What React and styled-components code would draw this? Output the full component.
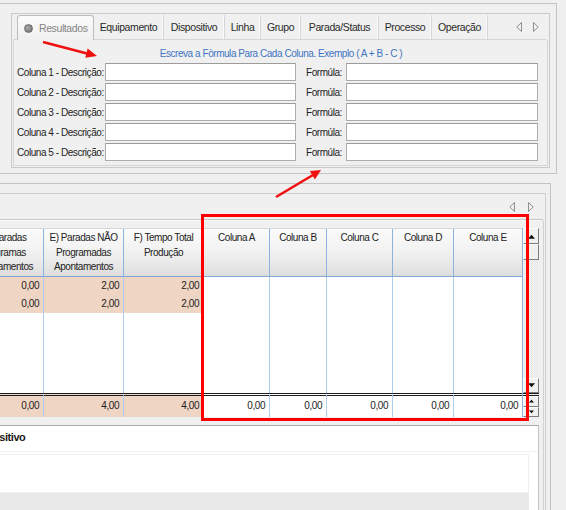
import React from 'react';
import styled, { createGlobalStyle } from 'styled-components';

const Global = createGlobalStyle`
  html, body { margin: 0; padding: 0; background: #f0f0f0; }
  body {
    font-family: "Liberation Sans", Arial, sans-serif;
    font-size: 10px;
    letter-spacing: -0.45px;
    color: #222;
  }
  * { box-sizing: border-box; }
`;

const Screen = styled.div`
  position: relative;
  width: 566px;
  height: 510px;
  overflow: hidden;
  background: #f0f0f0;
`;

/* ---------- top: formula tab ---------- */
const OuterGroup = styled.div`
  margin-top: 3px;
  width: 557px;
  border: 1px solid #c4c4c4;
  border-left: none;
  padding: 9px 6px 5px 11px;
`;

const TabControl = styled.div`
  height: 155px;
  border: 1px solid #cacaca;
  display: flex;
  flex-direction: column;
`;

const TabStrip = styled.div`
  height: 25px;
  padding: 1px 10px 0 5px;
  display: flex;
  align-items: stretch;
`;

const Tab = styled.div`
  position: relative;
  z-index: 1;
  width: ${p => p.$w}px;
  display: flex;
  align-items: center;
  justify-content: ${p => (p.$active ? 'flex-start' : 'center')};
  gap: 6px;
  padding-left: ${p => (p.$active ? '6px' : '0')};
  font-size: 10.5px;
  letter-spacing: -0.4px;
  white-space: nowrap;
  color: ${p => (p.$active ? '#858585' : '#2b2b2b')};
  border-right: 1px solid ${p => (p.$active ? '#bdbdbd' : '#d6d6d6')};
  box-shadow: ${p => (p.$active ? 'none' : 'inset -1px 0 0 #fafafa')};
  ${p =>
    p.$active &&
    `
    border: 1px solid #bdbdbd;
    border-bottom: none;
    border-radius: 3px 3px 0 0;
    background: linear-gradient(#fbfbfb, #f0f0f0);
    margin-bottom: -1px;
  `}
`;

const StatusDot = styled.span`
  width: 9px;
  height: 9px;
  border-radius: 50%;
  background: radial-gradient(circle at 35% 35%, #a8a8a8, #6e6e6e);
  border: 1px solid #6a6a6a;
  flex: none;
`;

const StripArrows = styled.div`
  margin-left: auto;
  display: flex;
  align-items: center;
  gap: 11px;
`;

const TabPanel = styled.div`
  flex: 1;
  margin: 0 1px 1px 1px;
  border: 1px solid #d6d6d6;
  border-radius: 0 3px 0 0;
  padding: 7px 8px 0 3px;
`;

const Hint = styled.div`
  text-align: center;
  line-height: 13px;
  color: #3f74c2;
  margin-bottom: 3px;
  padding-left: 6px;
`;

const FormGrid = styled.div`
  display: grid;
  grid-template-columns: 88px 191px 50px 192px;
  grid-auto-rows: 18px;
  row-gap: 2px;
  align-items: center;
`;

const FieldLabel = styled.label`
  white-space: nowrap;
  color: #1f1f1f;
  padding-left: ${p => (p.$indent ? '10px' : '0')};
`;

const Field = styled.input`
  height: 18px;
  width: 100%;
  margin: 0;
  padding: 0 3px;
  border: 1px solid #acacac;
  border-top-color: #9c9c9c;
  background: #fff;
  outline: none;
  font: inherit;
`;

/* ---------- bottom: grid ---------- */
const LowerSection = styled.div`
  margin-top: 9px;
  margin-left: -37px;
  width: 588px;
  height: 400px;
  border-top: 1px solid #c4c4c4;
  border-right: 1px solid #c4c4c4;
  padding: 9px 4px 0 0;
`;

const InnerFrame = styled.div`
  height: 100%;
  border-top: 1px solid #cfcfcf;
  border-right: 1px solid #cfcfcf;
  padding-right: 1px;
`;

const ArrowRow = styled.div`
  height: 25px;
  display: flex;
  justify-content: flex-end;
  align-items: center;
  gap: 13px;
  padding-right: 10px;
`;

const GridPanel = styled.div`
  height: 100%;
  border-top: 1px solid #c6c6c6;
  border-right: 1px solid #d2d2d2;
  border-radius: 0 3px 0 0;
  box-shadow: inset 0 1px 0 #fbfbfb;
  padding: 8px 4px 0 0;
`;

const GridBox = styled.div`
  display: flex;
  height: 189px;
`;

const Table = styled.div`
  display: grid;
  grid-template-columns: ${p => p.$cols};
  grid-template-rows: 48px 18px 18px 1fr 24px;
  border-top: 1px solid #d8d8d8;
`;

const HeadCell = styled.div`
  border-left: 1px solid #8db2de;
  border-bottom: 1px solid #7fa6d6;
  background: linear-gradient(#fbfbfb 0%, #f2f2f2 45%, #e6e6e6 80%, #dcdcdc 100%);
  text-align: center;
  line-height: 14.5px;
  padding-top: 2px;
  color: #222;
  white-space: nowrap;
  overflow: hidden;
`;

const Cell = styled.div`
  border-left: 1px solid #aecdf1;
  background: ${p => (p.$peach ? '#efd5c4' : '#fff')};
  text-align: right;
  padding-right: 4px;
  line-height: 18px;
  color: #222;
`;

const TotalCell = styled(Cell)`
  border-top: 3px double #1c1c1c;
  line-height: 20px;
`;

const ScrollBar = styled.div`
  width: 17px;
  display: flex;
  flex-direction: column;
  border-left: 1px solid #8db2de;
  background: #fff;
`;

const ScrollButton = styled.div`
  height: ${p => p.$h}px;
  display: flex;
  align-items: center;
  justify-content: center;
  background: #f0f0f0;
  border: 1px solid;
  border-color: #fdfdfd #7c7c7c #7c7c7c #fdfdfd;
`;

const Track = styled.div`
  flex: 1;
  background: repeating-conic-gradient(#e4e4e4 0 25%, #f7f7f7 0 50%) 0 0 / 2px 2px;
`;

const ScrollTotals = styled.div`
  height: 24px;
  border-top: 3px double #1c1c1c;
  display: flex;
  flex-direction: column;
  background: #f0f0f0;
`;

const SpinButton = styled(ScrollButton)`
  flex: 1;
`;

const LowerPanel = styled.div`
  margin-top: 8px;
  height: 100px;
  background: #fff;
  border-top: 1px solid #a9a9a9;
  border-right: 1px solid #c4c4c4;
`;

const LowerHeader = styled.div`
  height: 26px;
  padding: 5px 0 0 8px;
  font-weight: bold;
  font-size: 11px;
  color: #1a1a1a;
  border-bottom: 1px solid #f0f0f0;
`;

const LowerBody = styled.div`
  margin: 2px 9px 0 0;
  height: 39px;
  border: 1px solid #f0f0f0;
  border-left: none;
  background: #fff;
`;

const LowerFoot = styled.div`
  margin-right: 9px;
  height: 40px;
  background: #e8e8e8;
`;

/* ---------- annotations ---------- */
const RedBox = styled.div`
  position: absolute;
  left: 201px;
  top: 214px;
  width: 328px;
  height: 207px;
  border: 3px solid #ff0000;
  pointer-events: none;
`;

const Overlay = styled.svg`
  position: absolute;
  left: 0;
  top: 0;
  pointer-events: none;
`;

const OutlineLeft = () => (
  <svg width="6" height="10" viewBox="0 0 6 10">
    <path d="M5.5 0.5 L0.8 5 L5.5 9.5 Z" fill="none" stroke="#8f8f8f" strokeWidth="1" />
  </svg>
);
const OutlineRight = () => (
  <svg width="6" height="10" viewBox="0 0 6 10">
    <path d="M0.5 0.5 L5.2 5 L0.5 9.5 Z" fill="none" stroke="#8f8f8f" strokeWidth="1" />
  </svg>
);
const SolidUp = ({ s = 7 }) => (
  <svg width={s} height={Math.ceil(s / 2) + 1} viewBox="0 0 8 5">
    <path d="M0 5 L4 0.5 L8 5 Z" fill="#111" />
  </svg>
);
const SolidDown = ({ s = 7 }) => (
  <svg width={s} height={Math.ceil(s / 2) + 1} viewBox="0 0 8 5">
    <path d="M0 0 L4 4.5 L8 0 Z" fill="#111" />
  </svg>
);

const tabs = [
  { label: 'Resultados', w: 77, active: true },
  { label: 'Equipamento', w: 70 },
  { label: 'Dispositivo', w: 61 },
  { label: 'Linha', w: 36 },
  { label: 'Grupo', w: 40 },
  { label: 'Parada/Status', w: 78 },
  { label: 'Processo', w: 53 },
  { label: 'Operação', w: 56 },
];

const columns = [
  { w: 80, head: ['D) Paradas', 'Programas', 'Apontamentos'], peach: true, rows: ['0,00', '0,00'], total: '0,00' },
  { w: 80, head: ['E) Paradas NÃO', 'Programadas', 'Apontamentos'], peach: true, rows: ['2,00', '2,00'], total: '4,00' },
  { w: 80, head: ['F) Tempo Total', 'Produção'], peach: true, rows: ['2,00', '2,00'], total: '4,00' },
  { w: 66, head: ['Coluna A'], rows: ['', ''], total: '0,00' },
  { w: 57, head: ['Coluna B'], rows: ['', ''], total: '0,00' },
  { w: 66, head: ['Coluna C'], rows: ['', ''], total: '0,00' },
  { w: 61, head: ['Coluna D'], rows: ['', ''], total: '0,00' },
  { w: 69, head: ['Coluna E'], rows: ['', ''], total: '0,00' },
];

export default function App() {
  const cols = columns.map(c => `${c.w}px`).join(' ');
  return (
    <Screen>
      <Global />
      <OuterGroup>
        <TabControl>
          <TabStrip>
            {tabs.map(t => (
              <Tab key={t.label} $w={t.w} $active={t.active}>
                {t.active && <StatusDot />}
                {t.label}
              </Tab>
            ))}
            <StripArrows>
              <OutlineLeft />
              <OutlineRight />
            </StripArrows>
          </TabStrip>
          <TabPanel>
            <Hint>Escreva a Fòrmula Para Cada Coluna. Exemplo ( A + B - C )</Hint>
            <FormGrid>
              {[1, 2, 3, 4, 5].map(n => (
                <React.Fragment key={n}>
                  <FieldLabel>Coluna {n} - Descrição:</FieldLabel>
                  <Field type="text" aria-label={`Coluna ${n} - Descrição`} />
                  <FieldLabel $indent>Formúla:</FieldLabel>
                  <Field type="text" aria-label={`Formúla ${n}`} />
                </React.Fragment>
              ))}
            </FormGrid>
          </TabPanel>
        </TabControl>
      </OuterGroup>

      <LowerSection>
        <InnerFrame>
          <ArrowRow>
            <OutlineLeft />
            <OutlineRight />
          </ArrowRow>
          <GridPanel>
            <GridBox>
              <Table $cols={cols}>
                {columns.map((c, i) => (
                  <HeadCell key={`h${i}`}>
                    {c.head.map((l, j) => (
                      <div key={j}>{l}</div>
                    ))}
                  </HeadCell>
                ))}
                {[0, 1].map(r =>
                  columns.map((c, i) => (
                    <Cell key={`r${r}-${i}`} $peach={c.peach}>
                      {c.rows[r]}
                    </Cell>
                  ))
                )}
                {columns.map((c, i) => (
                  <Cell key={`f${i}`} />
                ))}
                {columns.map((c, i) => (
                  <TotalCell key={`t${i}`} $peach={c.peach}>
                    {c.total}
                  </TotalCell>
                ))}
              </Table>
              <ScrollBar>
                <ScrollButton $h={16}>
                  <SolidUp />
                </ScrollButton>
                <ScrollButton $h={16} />
                <Track />
                <ScrollButton $h={15}>
                  <SolidDown />
                </ScrollButton>
                <ScrollTotals>
                  <SpinButton>
                    <SolidUp s={5} />
                  </SpinButton>
                  <SpinButton>
                    <SolidDown s={5} />
                  </SpinButton>
                </ScrollTotals>
              </ScrollBar>
            </GridBox>
            <LowerPanel>
              <LowerHeader>Dispositivo</LowerHeader>
              <LowerBody />
              <LowerFoot />
            </LowerPanel>
          </GridPanel>
        </InnerFrame>
      </LowerSection>

      <RedBox />
      <Overlay width="566" height="510" viewBox="0 0 566 510">
        <line x1="43" y1="42" x2="87" y2="53.4" stroke="#f01010" strokeWidth="2.6" />
        <polygon points="97,56 85.3,57.8 87.6,48.6" fill="#f01010" />
        <line x1="276" y1="197" x2="313" y2="175" stroke="#f01010" strokeWidth="2.6" />
        <polygon points="321,170 314.9,179.4 309.9,171" fill="#f01010" />
      </Overlay>
    </Screen>
  );
}
